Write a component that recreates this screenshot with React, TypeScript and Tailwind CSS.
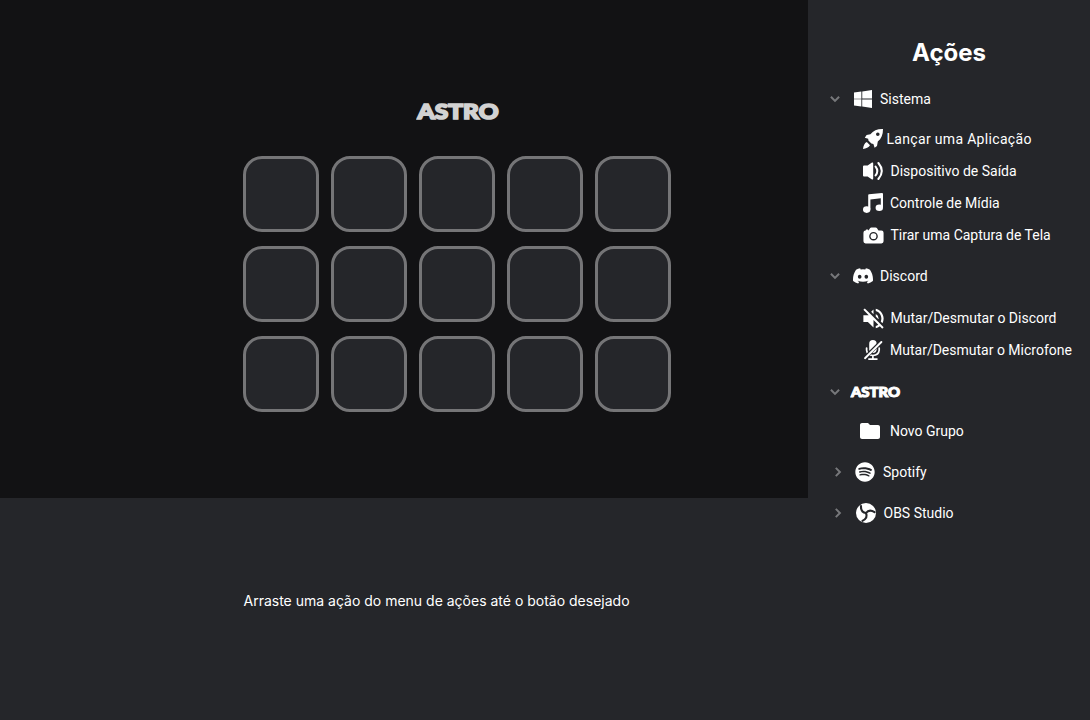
import type { ReactNode } from 'react';
import { BsWindows, BsDiscord } from 'react-icons/bs';
import { IoCamera } from 'react-icons/io5';
import { FaSpotify } from 'react-icons/fa';
import { MdVolumeOff, MdFolder } from 'react-icons/md';

function Chevron({ open }: { open: boolean }) {
  return (
    <svg
      width="10"
      height="10"
      viewBox="0 0 10 10"
      fill="none"
      stroke="#77787b"
      strokeWidth="2"
      className={open ? 'shrink-0' : 'shrink-0 -rotate-90'}
    >
      <path d="M0.9 2.8 5 6.9 9.1 2.8" />
    </svg>
  );
}

function Wordmark({ width, height, className }: { width: number; height: number; className: string }) {
  return (
    <svg width={width} height={height} viewBox="0 0 84 26" preserveAspectRatio="none" className={className}>
      <text
        x="1.500"
        y="21.200"
        textLength="81"
        lengthAdjust="spacingAndGlyphs"
        fontFamily="Lato, sans-serif"
        fontWeight="900"
        fontSize="21.600"
        fill="currentColor"
        stroke="currentColor"
        strokeWidth="1.700"
      >
        ASTRO
      </text>
    </svg>
  );
}

function RocketIcon() {
  return (
    <svg width="20" height="20" viewBox="0 0 20 20" fill="#fff">
      <path
        fillRule="evenodd"
        d="M20 0C14.500-.1 10.400 1.600 7.400 5.200L3.600 6 1.800 8.800 5.200 9.800 5.400 11.600 8.400 14.600 10.400 15 11.600 18.800 14 17 14.800 12.600C18.400 9.600 20 5.600 20 0ZM14.800 3.500a1.800 1.800 0 1 0 0 3.600 1.800 1.800 0 0 0 0-3.600Z"
      />
      <path d="M3.800 13 7 16.200C5.800 18.600 3 19.200 0 20 .4 17.200 1.400 14 3.800 13Z" />
    </svg>
  );
}

function SpeakerIcon() {
  return (
    <svg width="20" height="20" viewBox="0 0 20 20" fill="none">
      <path fill="#fff" d="M1 4.600h3.600L9 1.600q1.200-.6 1.200.8v15.200q0 1.400-1.200.8l-4.400-3H1q-1 0-1-1V5.600q0-1 1-1Z" />
      <path stroke="#fff" strokeWidth="2" strokeLinecap="round" d="M12.600 5.600q3.400 4.400 0 8.800M15.400 2q6.800 8 0 16" />
    </svg>
  );
}

function MusicIcon() {
  return (
    <svg width="20" height="20" viewBox="0 0 20 20" fill="#fff">
      <path d="M5.200 2.200Q5.200 1.400 6 1.300L19 0Q20 0 20 .9V14.600H17.800V5.200L7.400 6.400V16.600H5.200Z" />
      <ellipse cx="3.700" cy="16.600" rx="3.700" ry="3.300" />
      <ellipse cx="16.300" cy="14.700" rx="3.700" ry="3.300" />
    </svg>
  );
}

function MicOffIcon() {
  return (
    <svg width="20" height="20" viewBox="0 0 20 20" fill="none" strokeLinecap="round">
      <rect x="6.200" y="0" width="7.400" height="13" rx="3.700" fill="#fff" />
      <path stroke="#fff" strokeWidth="1.700" d="M3.600 8v2.200q.5 5 6.300 5.300 5.800-.3 6.300-5.300V8M9.900 15.500V19M5.900 19.100h8" />
      <path stroke="#25262a" strokeWidth="3.600" d="M2 17.600 18 1.800" />
      <path stroke="#fff" strokeWidth="1.900" d="M2 18.200 18.400 2" />
    </svg>
  );
}

function ObsIcon() {
  return (
    <svg width="20" height="20" viewBox="0 0 20 20" fill="none">
      <circle cx="10" cy="10" r="10" fill="#fff" />
      <g stroke="#25262a" strokeWidth="2.100" strokeLinecap="round">
        <path d="M5 3Q4.600 9.400 10 10" />
        <path d="M5 3Q4.600 9.400 10 10" transform="rotate(120 10 10)" />
        <path d="M5 3Q4.600 9.400 10 10" transform="rotate(240 10 10)" />
      </g>
    </svg>
  );
}

function IconBox({ children }: { children: ReactNode }) {
  return <span className="flex w-5 shrink-0 items-center justify-center *:shrink-0">{children}</span>;
}

function Row({ className = '', icon, label, labelClass }: { className?: string; icon: ReactNode; label: string; labelClass: string }) {
  return (
    <div className={`flex h-8 items-center whitespace-nowrap ${className}`}>
      <IconBox>{icon}</IconBox>
      <span className={labelClass}>{label}</span>
    </div>
  );
}

export default function App() {
  return (
    <div className="flex h-[720px] w-[1090px] overflow-hidden bg-[#25262a] text-white">
      <main className="flex w-[808px] flex-col">
        <section className="h-[498px] bg-[#121214] pt-[98px] pl-[243px]">
          <Wordmark width={84} height={26} className="ml-[172.500px] block text-[#d2d2d2]" />
          <div className="mt-8 grid w-[428px] grid-cols-5 gap-x-3 gap-y-3.5">
            {Array.from({ length: 15 }, (_, i) => (
              <div key={i} className="h-[76px] rounded-[19px] border-3 border-[#757577] bg-[#25262a]" />
            ))}
          </div>
        </section>
        <p className="mt-[93px] ml-[243.500px] font-['Inter'] text-[14px] leading-5">
          Arraste uma ação do menu de ações até o botão desejado
        </p>
      </main>

      <aside className="w-[282px] font-['Roboto'] text-[14px] leading-5">
        <h1 className="mt-[37px] text-center font-['Inter'] text-[24px] leading-8 font-bold">Ações</h1>

        <div className="mt-[14px] flex h-8 items-center pl-[22px]">
          <Chevron open />
          <Row className="pl-[13px]" icon={<BsWindows size={18} />} label="Sistema" labelClass="ml-[7px]" />
        </div>
        <div className="mt-2 pl-[55px]">
          <Row icon={<RocketIcon />} label="Lançar uma Aplicação" labelClass="ml-[3.500px] tracking-[0.32px]" />
          <Row icon={<SpeakerIcon />} label="Dispositivo de Saída" labelClass="ml-[7.500px]" />
          <Row icon={<MusicIcon />} label="Controle de Mídia" labelClass="ml-[7px]" />
          <Row icon={<IoCamera size={23} />} label="Tirar uma Captura de Tela" labelClass="ml-[7.500px]" />
        </div>

        <div className="mt-[9px] flex h-8 items-center pl-[22px]">
          <Chevron open />
          <Row className="pl-[13px]" icon={<BsDiscord size={20} />} label="Discord" labelClass="ml-[7px]" />
        </div>
        <div className="mt-2.5 pl-[55px]">
          <Row icon={<MdVolumeOff size={27} />} label="Mutar/Desmutar o Discord" labelClass="ml-[7.500px]" />
          <Row icon={<MicOffIcon />} label="Mutar/Desmutar o Microfone" labelClass="ml-[7px]" />
        </div>

        <div className="mt-2.5 flex h-8 items-center pl-[22px]">
          <Chevron open />
          <Wordmark width={51} height={16} className="ml-[9.500px] block" />
        </div>
        <div className="mt-[7px] pl-[52px]">
          <Row icon={<MdFolder size={24} />} label="Novo Grupo" labelClass="ml-[10px]" />
        </div>

        <div className="mt-[9px] flex h-8 items-center pl-[25px]">
          <Chevron open={false} />
          <Row className="pl-[12px]" icon={<FaSpotify size={20} />} label="Spotify" labelClass="ml-[8px]" />
        </div>
        <div className="mt-[9px] flex h-8 items-center pl-[25px]">
          <Chevron open={false} />
          <Row className="pl-[13px]" icon={<ObsIcon />} label="OBS Studio" labelClass="ml-[7.500px]" />
        </div>
      </aside>
    </div>
  );
}
